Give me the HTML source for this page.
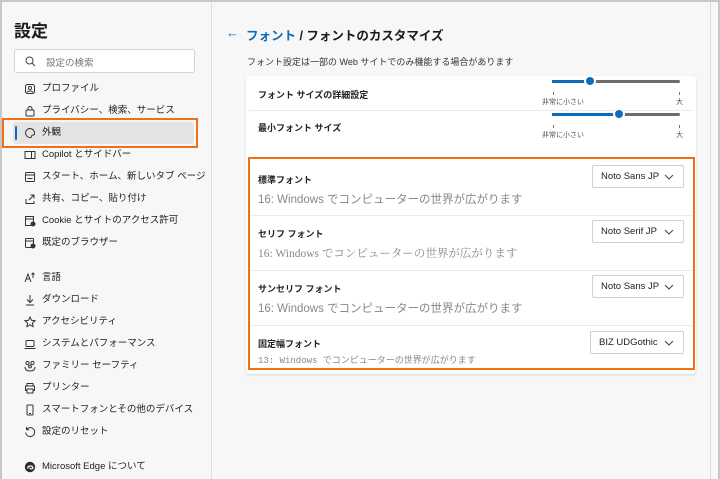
<!DOCTYPE html>
<html><head><meta charset="utf-8"><style>
*{box-sizing:border-box;margin:0;padding:0}
html,body{width:720px;height:479px;overflow:hidden}
body{position:relative;background:#f7f7f7;font-family:"Liberation Sans","Noto Sans CJK JP",sans-serif;color:#1b1b1b}
.a{position:absolute;white-space:nowrap}
#frame{position:absolute;left:0;top:0;width:720px;height:479px;border:2px solid #c8c8c8;border-bottom:none;pointer-events:none}
#side{position:absolute;left:2px;top:2px;width:210px;height:477px;background:#f7f7f7;border-right:1px solid #dedede}
.nav{position:absolute;left:24px;font-size:9.5px;color:#222;height:14px;line-height:14px;white-space:nowrap;width:185px}
.nav svg{position:absolute;left:0;top:1px}
.nav span{position:absolute;left:18px;white-space:nowrap}
#right{position:absolute;left:710px;top:2px;width:1px;height:477px;background:#dcdcdc}
.card{position:absolute;left:246px;top:76px;width:450px;height:298px;background:#fff;border-radius:4px;box-shadow:0 1px 2px rgba(0,0,0,.15)}
.lbl{font-size:9px;font-weight:bold;color:#222}
.smp{font-size:11.5px;color:#888}
.dd{position:absolute;width:92px;height:23px;border:1px solid #d0d0d0;border-radius:2px;background:#fff;font-size:9.5px;color:#222;line-height:21px;padding-left:8px;white-space:nowrap}
.dd svg{position:absolute;right:9px;top:8px}
.hr{position:absolute;left:249px;width:445px;height:1px;background:#ebebeb}
.small{font-size:7px;color:#555}
</style></head><body>
<div id="side">
<div class="a" style="left:12px;top:15px;font-size:17px;font-weight:bold;color:#1b1b1b">設定</div>
<div class="a" style="left:12px;top:47px;width:181px;height:24px;background:#fff;border:1px solid #d3d3d3;border-radius:3px">
<svg class="a" style="left:10px;top:6px" width="11" height="11" viewBox="0 0 11 11"><circle cx="4.5" cy="4.5" r="3.5" fill="none" stroke="#444" stroke-width="1"/><path d="M7 7l3 3" stroke="#444"/></svg>
<span class="a" style="left:31px;top:5px;font-size:9.5px;color:#777">設定の検索</span></div>
<div class="a" style="left:11px;top:120px;width:181px;height:22px;background:#e4e4e4;border-radius:3px"></div>
<div class="a" style="left:13px;top:124px;width:2px;height:14px;background:#0f6cbd;border-radius:1px"></div>
</div>
<div class="a" style="left:2px;top:118px;width:196px;height:30px;border:2px solid #f07018"></div>

<div class="nav" style="top:82px"><svg width="12" height="12"><rect x="1.5" y="1.5" width="9" height="9" rx="2" fill="none" stroke="#333"/><circle cx="6" cy="5" r="1.6" fill="none" stroke="#333"/><path d="M3 9.5c1-2 5-2 6 0" fill="none" stroke="#333"/></svg><span>プロファイル</span></div>
<div class="nav" style="top:104px"><svg width="12" height="12"><rect x="2" y="5" width="8" height="6" rx="1" fill="none" stroke="#333"/><path d="M4 5V3.5a2 2 0 0 1 4 0V5" fill="none" stroke="#333"/></svg><span>プライバシー、検索、サービス</span></div>
<div class="nav" style="top:126px"><svg width="12" height="12"><path d="M6 1.5a4.5 4.5 0 1 0 1 8.9c1-.3.2-1.8 1.2-2.2 1.2-.5 2.5.3 2.3-1.8A4.6 4.6 0 0 0 6 1.5z" fill="none" stroke="#333"/></svg><span>外観</span></div>
<div class="nav" style="top:148px"><svg width="12" height="12"><rect x="1" y="2.5" width="10" height="7" fill="none" stroke="#333"/><path d="M7.5 2.5v7" stroke="#333"/></svg><span>Copilot とサイドバー</span></div>
<div class="nav" style="top:170px"><svg width="12" height="12"><rect x="1.5" y="1.5" width="9" height="9" rx="1" fill="none" stroke="#333"/><path d="M1.5 4h9M3.5 7.5h5" stroke="#333"/></svg><span>スタート、ホーム、新しいタブ ページ</span></div>
<div class="nav" style="top:192px"><svg width="12" height="12"><path d="M2 6v4.5h8V8M5 7l5-5M6.5 2H10v3.5" fill="none" stroke="#333"/></svg><span>共有、コピー、貼り付け</span></div>
<div class="nav" style="top:214px"><svg width="12" height="12"><rect x="1.5" y="1.5" width="8" height="9" fill="none" stroke="#333"/><path d="M1.5 4h8" stroke="#333"/><circle cx="9" cy="9" r="2.5" fill="#333"/></svg><span>Cookie とサイトのアクセス許可</span></div>
<div class="nav" style="top:236px"><svg width="12" height="12"><rect x="1.5" y="1.5" width="8" height="9" rx="1" fill="none" stroke="#333"/><path d="M1.5 4h8" stroke="#333"/><circle cx="9" cy="9" r="2.5" fill="#333"/></svg><span>既定のブラウザー</span></div>
<div class="nav" style="top:271px"><svg width="12" height="12"><path d="M1 10L4 2l3 8M2.2 7h3.6M9 1v5M7.5 2.5L9 1l1.5 1.5" fill="none" stroke="#333"/></svg><span>言語</span></div>
<div class="nav" style="top:293px"><svg width="12" height="12"><path d="M6 1v7M3 5.5L6 8.5 9 5.5M2 11h8" fill="none" stroke="#333"/></svg><span>ダウンロード</span></div>
<div class="nav" style="top:315px"><svg width="12" height="12"><path d="M6 1l1.5 3.3 3.5.4-2.6 2.4.7 3.5L6 8.8 2.9 10.6l.7-3.5L1 4.7l3.5-.4z" fill="none" stroke="#333"/></svg><span>アクセシビリティ</span></div>
<div class="nav" style="top:337px"><svg width="12" height="12"><rect x="2" y="2.5" width="8" height="6" rx="1" fill="none" stroke="#333"/><path d="M0.5 10.5h11" stroke="#333"/></svg><span>システムとパフォーマンス</span></div>
<div class="nav" style="top:359px"><svg width="12" height="12"><circle cx="3.5" cy="3" r="1.6" fill="none" stroke="#333"/><circle cx="8.5" cy="3" r="1.6" fill="none" stroke="#333"/><circle cx="6" cy="6.5" r="1.4" fill="none" stroke="#333"/><path d="M1 7c0 3 2.5 4 5 4s5-1 5-4" fill="none" stroke="#333"/></svg><span>ファミリー セーフティ</span></div>
<div class="nav" style="top:381px"><svg width="12" height="12"><path d="M3 4V1.5h6V4M3 8.5H1.5V4h9v4.5H9M3 7h6v4H3z" fill="none" stroke="#333"/></svg><span>プリンター</span></div>
<div class="nav" style="top:403px"><svg width="12" height="12"><rect x="3" y="1" width="6" height="10" rx="1" fill="none" stroke="#333"/><path d="M5 9.5h2" stroke="#333"/></svg><span>スマートフォンとその他のデバイス</span></div>
<div class="nav" style="top:425px"><svg width="12" height="12"><path d="M2.5 3.5a4.5 4.5 0 1 1-.8 3M2.5 1v2.8h2.8" fill="none" stroke="#333"/></svg><span>設定のリセット</span></div>
<div class="nav" style="top:460px"><svg width="12" height="12"><circle cx="6" cy="6" r="5.2" fill="#2b2b2b"/><path d="M3.5 7.5c.5-3 5-3.5 5.5-.5-1 1.3-3 1-3-.3" fill="none" stroke="#fff" stroke-width="1.2"/></svg><span>Microsoft Edge について</span></div>

<div id="right"></div>
<div class="a" style="left:226px;top:25px;font-size:13px;color:#0f6cbd">←</div>
<div class="a" style="left:246px;top:25px;font-size:12.5px;font-weight:bold"><span style="color:#0f6cbd">フォント</span> / フォントのカスタマイズ</div>
<div class="a" style="left:247px;top:55px;font-size:9px;color:#333">フォント設定は一部の Web サイトでのみ機能する場合があります</div>

<div class="card"></div>
<div class="a lbl" style="left:258px;top:88px">フォント サイズの詳細設定</div>
<div class="a lbl" style="left:258px;top:121px">最小フォント サイズ</div>
<div class="hr" style="top:110px"></div>
<div class="a" style="left:552px;top:80px;width:128px;height:3px;background:#6d6d6d;border-radius:2px"></div>
<div class="a" style="left:552px;top:80px;width:38px;height:3px;background:#0f6cbd"></div>
<div class="a" style="left:584px;top:75px;width:12px;height:12px;border-radius:50%;background:#0f6cbd;border:2px solid #fff"></div>
<div class="a" style="left:552px;top:113px;width:128px;height:3px;background:#6d6d6d;border-radius:2px"></div>
<div class="a" style="left:552px;top:113px;width:67px;height:3px;background:#0f6cbd"></div>
<div class="a" style="left:613px;top:108px;width:12px;height:12px;border-radius:50%;background:#0f6cbd;border:2px solid #fff"></div>
<div class="a" style="left:553px;top:92px;width:1px;height:3px;background:#777"></div>
<div class="a" style="left:679px;top:92px;width:1px;height:3px;background:#777"></div>
<div class="a" style="left:553px;top:125px;width:1px;height:3px;background:#777"></div>
<div class="a" style="left:679px;top:125px;width:1px;height:3px;background:#777"></div>
<div class="a small" style="left:542px;top:97px">非常に小さい</div><div class="a small" style="left:676px;top:97px">大</div>
<div class="a small" style="left:542px;top:130px">非常に小さい</div><div class="a small" style="left:676px;top:130px">大</div>

<div class="a lbl" style="left:258px;top:173px">標準フォント</div>
<div class="a smp" style="left:258px;top:191px">16: Windows でコンピューターの世界が広がります</div>
<div class="dd" style="left:592px;top:165px">Noto Sans JP<svg width="10" height="6"><path d="M1 1l4 4 4-4" fill="none" stroke="#444"/></svg></div>
<div class="hr" style="top:215px"></div>
<div class="a lbl" style="left:258px;top:227px">セリフ フォント</div>
<div class="a smp" style="left:258px;top:245px;font-family:'Liberation Serif','Noto Serif CJK SC',serif">16: Windows でコンピューターの世界が広がります</div>
<div class="dd" style="left:592px;top:220px">Noto Serif JP<svg width="10" height="6"><path d="M1 1l4 4 4-4" fill="none" stroke="#444"/></svg></div>
<div class="hr" style="top:270px"></div>
<div class="a lbl" style="left:258px;top:282px">サンセリフ フォント</div>
<div class="a smp" style="left:258px;top:300px">16: Windows でコンピューターの世界が広がります</div>
<div class="dd" style="left:592px;top:275px">Noto Sans JP<svg width="10" height="6"><path d="M1 1l4 4 4-4" fill="none" stroke="#444"/></svg></div>
<div class="hr" style="top:325px"></div>
<div class="a lbl" style="left:258px;top:337px">固定幅フォント</div>
<div class="a" style="left:258px;top:353px;font-size:9px;color:#888;font-family:'Liberation Mono','Noto Sans CJK JP',monospace">13: Windows でコンピューターの世界が広がります</div>
<div class="dd" style="left:590px;top:331px;width:94px">BIZ UDGothic<svg width="10" height="6"><path d="M1 1l4 4 4-4" fill="none" stroke="#444"/></svg></div>

<div class="a" style="left:248px;top:157px;width:447px;height:213px;border:2px solid #f07018"></div>
<div id="frame"></div>
</body></html>
